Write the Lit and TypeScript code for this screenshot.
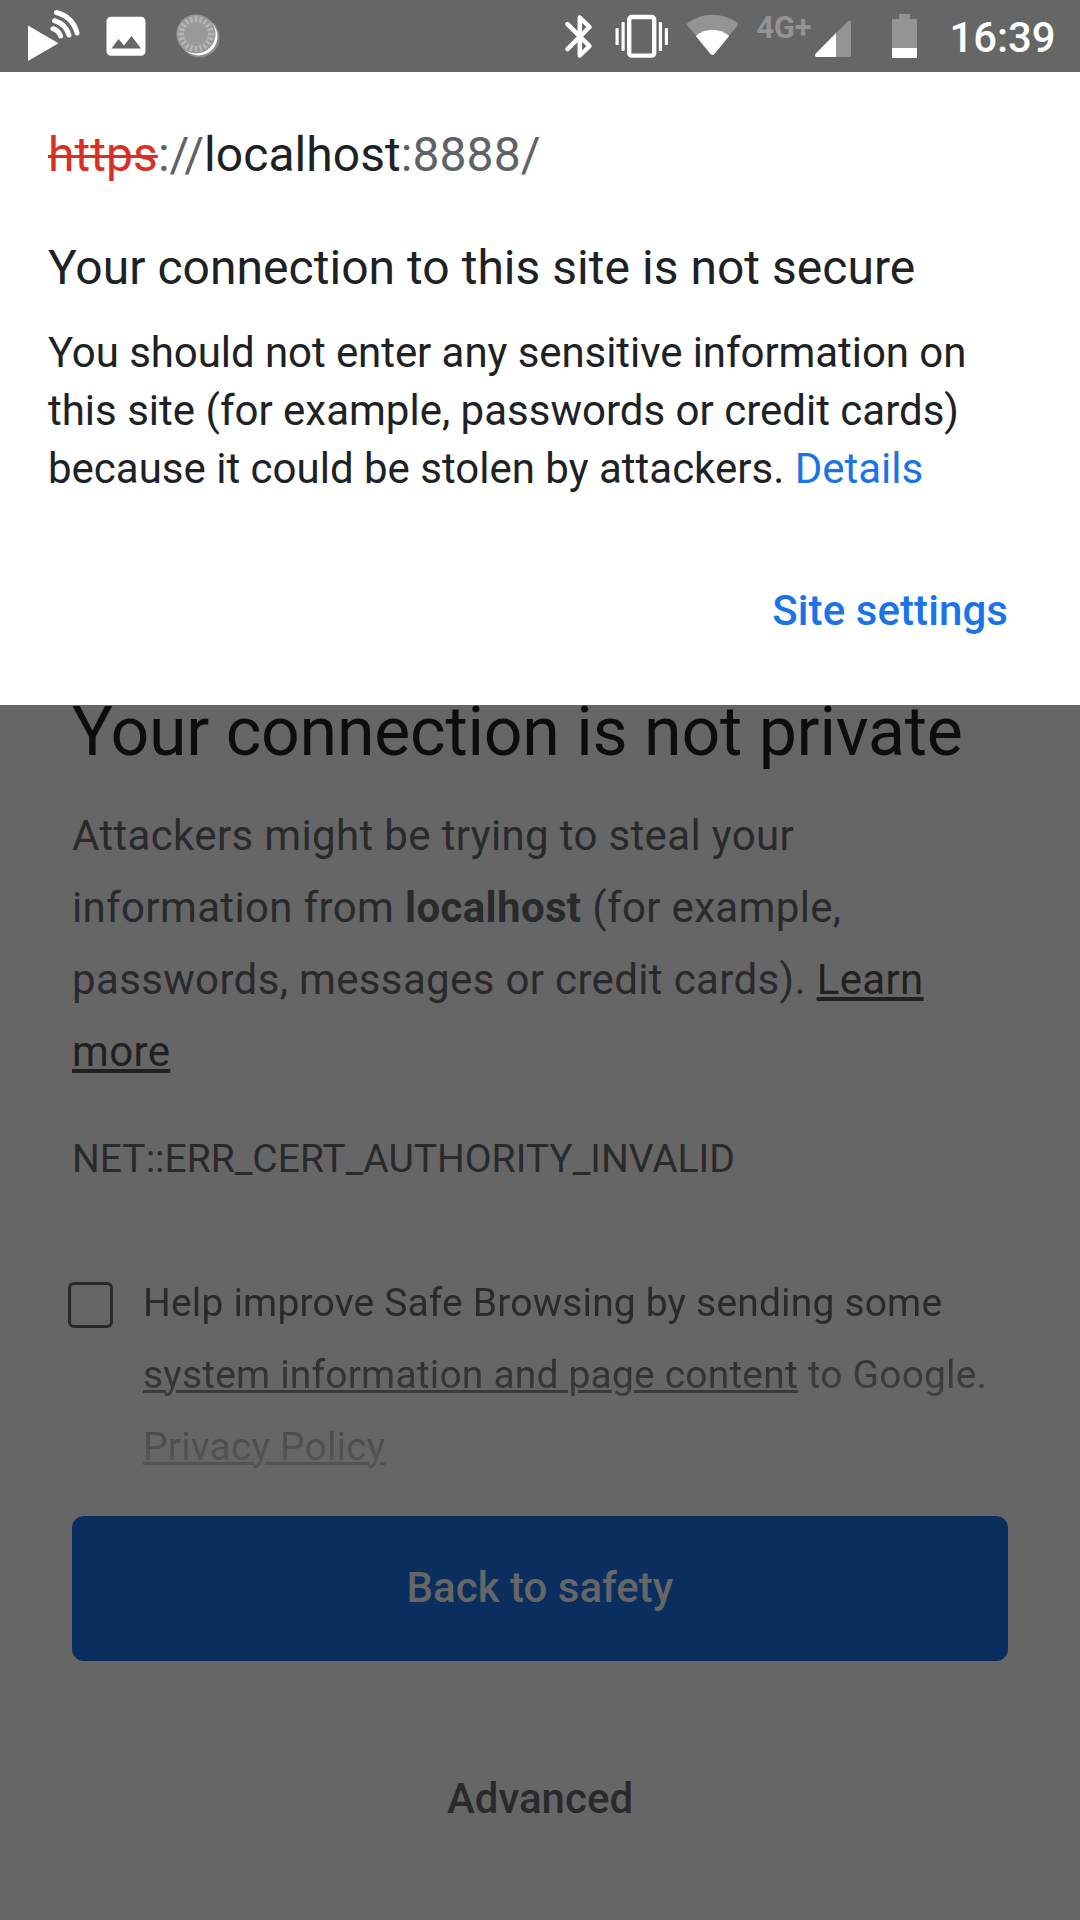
import { LitElement, html, css, svg } from "lit";
import { customElement } from "lit/decorators.js";

@customElement("status-bar")
class StatusBar extends LitElement {
  static styles = css`
    :host { display: block; height: 72px; background: #666; color: #fff; }
    .bar { display: block; width: 1080px; height: 72px; }
    .net { font: 700 32px Roboto, sans-serif; fill: #949494; }
    .time { font: 500 42px Roboto, sans-serif; fill: #fff; }
  `;
  private ticks() {
    return Array.from({ length: 20 }, (_, i) => svg`
      <path d="M196 22v-6" stroke="#b5b5b5" stroke-width="2.500" transform="rotate(${i * 18} 196 34)"/>`);
  }
  render() {
    return html`
      <svg class="bar" viewBox="0 0 1080 72">
        <path d="M28 25.5 58.500 43.300 28 61z" fill="#fff"/>
        <g fill="none" stroke="#fff" stroke-width="5" stroke-linecap="round">
          <path d="M53 28.700Q58.500 30.500 60.500 36"/>
          <path d="M54.500 20.700Q65.500 24 69 35"/>
          <path d="M56.500 12.500Q73 17 77 33"/>
        </g>
        <path fill="#fff" fill-rule="evenodd" d="M111 16.700h30a4.500 4.500 0 0 1 4.500 4.500v30a4.500 4.500 0 0 1-4.500 4.500h-30a4.500 4.500 0 0 1-4.500-4.500v-30a4.500 4.500 0 0 1 4.500-4.500zM111.500 48.500h29.500L131.500 36l-7.500 9.500-5.500-6.500z"/>
        <circle cx="199.500" cy="37.500" r="20" fill="#8a8a8a"/>
        <circle cx="198.500" cy="36.500" r="19" fill="#fff"/>
        <circle cx="196" cy="34" r="19.600" fill="#999"/>
        ${this.ticks()}
        <path d="M567.500 24.200 589.500 46.200 579.800 55.500V17.500L589.500 27 567.500 49.200" fill="none" stroke="#fff" stroke-width="4.500" stroke-linecap="round" stroke-linejoin="round"/>
        <rect x="629.200" y="17" width="25" height="38.600" rx="2.500" fill="none" stroke="#fff" stroke-width="4.400"/>
        <g fill="#fff">
          <rect x="615.500" y="28" width="3.200" height="17" rx="1"/>
          <rect x="621.500" y="22" width="3.200" height="29" rx="1"/>
          <rect x="658.800" y="22" width="3.200" height="29" rx="1"/>
          <rect x="664.800" y="28" width="3.200" height="17" rx="1"/>
        </g>
        <path d="M687.800 26Q686.200 23.800 688.500 22.300Q699 14.700 712.500 14.700T736.500 22.300Q738.800 23.800 737.200 26L729 35.800H696z" fill="#949494"/>
        <path d="M695.800 36Q703.500 29.700 712.500 29.700T729.200 36L714.500 54Q712.500 56.200 710.500 54z" fill="#fff"/>
        <text class="net" x="756.500" y="37.500" textLength="55" lengthAdjust="spacingAndGlyphs">4G+</text>
        <path d="M836 33V57h13q2 0 2-2V22.500q-.5-2.500-2.700-1.500z" fill="#949494"/>
        <path d="M836 33V57H816.500q-2.500-.8-1.200-3z" fill="#fff"/>
        <path d="M892 19h7v-5h11v5h7v29h-25z" fill="#949494"/>
        <rect x="892" y="48" width="25" height="10" fill="#fff"/>
        <text class="time" x="949.500" y="52" textLength="106" lengthAdjust="spacingAndGlyphs">16:39</text>
      </svg>`;
  }
}

@customElement("page-info")
class PageInfo extends LitElement {
  static styles = css`
    :host {
      display: flex; flex-direction: column; box-sizing: border-box; height: 633px;
      padding: 55px 48px 0; background: #fff; color: #202124; white-space: nowrap;
    }
    .url { font-size: 48px; line-height: 56px; letter-spacing: .06px; color: #5f6368; }
    .scheme { color: #d93025; text-decoration: line-through; text-decoration-thickness: 3px; }
    .host { color: #202124; }
    .title { margin-top: 57px; font-size: 48px; line-height: 56px; letter-spacing: .03px; }
    .text { margin-top: 28px; font-size: 42px; line-height: 58px; }
    .tight { letter-spacing: -.07px; }
    .link { color: #1a73e8; }
    .settings { margin: 88px 24px 0 0; align-self: flex-end; font-size: 42px; font-weight: 500; line-height: 50px; letter-spacing: .08px; color: #1a73e8; }
  `;
  render() {
    return html`
      <div class="url"><span class="scheme">https</span>://<span class="host">localhost</span>:8888/</div>
      <div class="title">Your connection to this site is not secure</div>
      <div class="text">
        <span class="tight">You should not enter any sensitive information on</span><br />
        this site (for example, passwords or credit cards)<br />
        because it could be stolen by attackers. <span class="link">Details</span>
      </div>
      <div class="settings">Site settings</div>`;
  }
}

@customElement("privacy-warning")
class PrivacyWarning extends LitElement {
  static styles = css`
    :host {
      display: flex; flex-direction: column; box-sizing: border-box; height: 1215px;
      padding: 0 72px; color: #282a2b; white-space: nowrap;
    }
    .title { font-size: 68px; line-height: 54px; letter-spacing: -.23px; color: #0d0d0d; }
    .text { margin-top: 41px; font-size: 42px; line-height: 72px; letter-spacing: .35px; }
    .u { color: #212121; text-decoration: underline; text-decoration-thickness: 4px; text-underline-offset: 3px; }
    .code { margin-top: 35px; font-size: 39px; line-height: 72px; }
    .optin { display: flex; margin: 71px 0 0 -4px; }
    .box { box-sizing: border-box; width: 45px; height: 46px; margin-top: 16px; border: 3px solid #292929; border-radius: 6px; }
    .fade {
      margin: 1px 0 0 30px; font-size: 39px; line-height: 72px; letter-spacing: .17px;
      mask-image: linear-gradient(#000 50px, rgba(0,0,0,.83) 84px, rgba(0,0,0,.69) 115px, rgba(0,0,0,.42) 157px, rgba(0,0,0,.26) 190px);
    }
    .fade .u { text-decoration-thickness: 3px; text-underline-offset: 2px; }
    .btn {
      margin-top: 33px; height: 145px; line-height: 143px; border-radius: 12px; background: #0a2e5d;
      color: #666; text-align: center; font-size: 42px; font-weight: 500;
    }
    .adv { margin-top: 102px; line-height: 72px; text-align: center; font-size: 42px; font-weight: 500; }
  `;
  render() {
    return html`
      <div class="title">Your connection is not private</div>
      <div class="text">
        Attackers might be trying to steal your<br />
        information from <b>localhost</b> (for example,<br />
        passwords, messages or credit cards). <span class="u">Learn</span><br />
        <span class="u">more</span>
      </div>
      <div class="code">NET::ERR_CERT_AUTHORITY_INVALID</div>
      <div class="optin">
        <div class="box"></div>
        <div class="fade">
          Help improve Safe Browsing by sending some<br />
          <span class="u">system information and page content</span> to Google.<br />
          <span class="u">Privacy Policy</span>
        </div>
      </div>
      <div class="btn">Back to safety</div>
      <div class="adv">Advanced</div>`;
  }
}

@customElement("app-root")
class AppRoot extends LitElement {
  static styles = css`
    :host { display: flex; flex-direction: column; width: 1080px; height: 1920px; overflow: hidden; background: #666; font-family: Roboto, sans-serif; }
  `;
  render() {
    return html`<status-bar></status-bar><page-info></page-info><privacy-warning></privacy-warning>`;
  }
}
